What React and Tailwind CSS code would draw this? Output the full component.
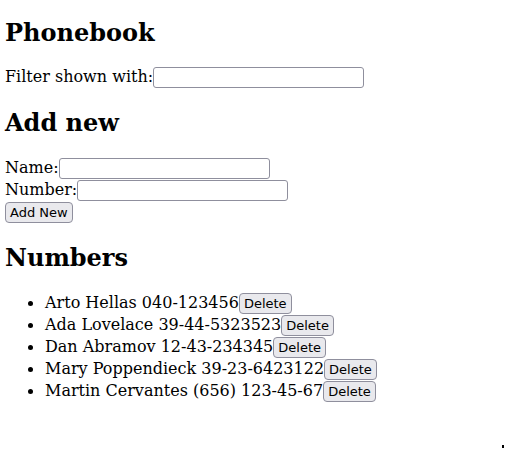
import React, { useState } from "react";

const persons = [
    { name: 'Arto Hellas', number: '040-123456' },
    { name: 'Ada Lovelace', number: '39-44-5323523' },
    { name: 'Dan Abramov', number: '12-43-234345' },
    { name: 'Mary Poppendieck', number: '39-23-6423122' },
    { name: 'Martin Cervantes', number: '(656) 123-45-67' },
];

const inputClass = "w-[211px] h-[21px] bg-white border border-[#8f8f9d] rounded-[3px] px-1 text-[13.333px] outline-none";
const buttonClass = "h-[21px] px-[4px] bg-[#e9e9ed] border border-[#8f8f9d] rounded-[4px] text-[13px] leading-none text-black font-['DejaVu_Sans',sans-serif]";

const App = () => {
    const [filter, setFilter] = useState('');
    const [newName, setNewName] = useState('');
    const [newNumber, setNewNumber] = useState('');

    return (
        <div className="relative min-h-[450px] bg-white text-black font-['DejaVu_Serif',serif] text-[16px] px-[5px] pt-[19px]">
            <h1 className="text-[24px] font-bold leading-[28px]">Phonebook</h1>

            {/* filter */}
            <div className="flex items-center h-[22px] mt-[19px]">
                <span>Filter shown with:</span>
                <input className={inputClass} value={filter} onChange={(e) => setFilter(e.target.value)} />
            </div>

            <h2 className="text-[24px] font-bold leading-[28px] mt-[21px]">Add new</h2>

            {/* form */}
            <form className="mt-[20px]" onSubmit={(e) => e.preventDefault()}>
                <div className="flex items-center h-[22px]">
                    <span>Name:</span>
                    <input className={inputClass} value={newName} onChange={(e) => setNewName(e.target.value)} />
                </div>
                <div className="flex items-center h-[22px]">
                    <span>Number:</span>
                    <input className={inputClass} value={newNumber} onChange={(e) => setNewNumber(e.target.value)} />
                </div>
                <div className="flex items-center h-[22px]">
                    <button type="submit" className={buttonClass}>Add New</button>
                </div>
            </form>

            <h2 className="text-[24px] font-bold leading-[28px] mt-[21px]">Numbers</h2>

            {/* list */}
            <ul className="list-disc pl-[40px] mt-[20px]">
                {
                    persons.map((p) => (
                        <li key={p.name} className="h-[22px]">
                            <span className="inline-flex items-center h-[22px] align-top">
                                <span>{p.name} {p.number}</span>
                                <button className={buttonClass}>Delete</button>
                            </span>
                        </li>
                    ))
                }
            </ul>

            <span className="absolute left-[502px] top-[445px] w-[2px] h-[3px] bg-black" />
        </div>
    );
};

export default App;
